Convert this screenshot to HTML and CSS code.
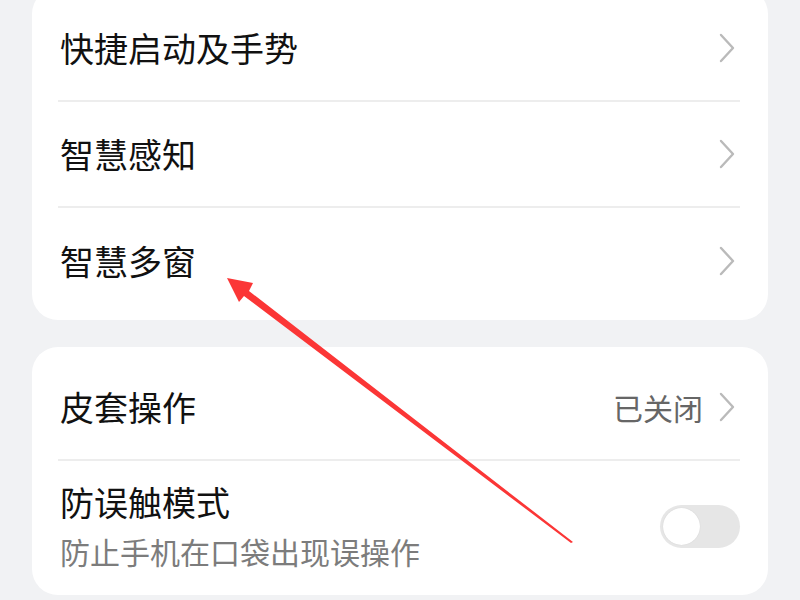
FILE: index.html
```html
<!DOCTYPE html>
<html lang="zh-CN">

<head>
    <meta charset="UTF-8">
    <meta name="viewport" content="width=device-width, initial-scale=1.0">
    <title>辅助功能</title>
    <link rel="stylesheet" href="styles.css">
</head>

<body>
    <div class="page">
        <div class="card first">
            <div class="row">
                <span class="title">快捷启动及手势</span>
                <svg class="chevron" viewBox="0 0 16 30"><path d="M2 2 L14 15 L2 28" /></svg>
            </div>
            <div class="row">
                <span class="title">智慧感知</span>
                <svg class="chevron" viewBox="0 0 16 30"><path d="M2 2 L14 15 L2 28" /></svg>
            </div>
            <div class="row">
                <span class="title">智慧多窗</span>
                <svg class="chevron" viewBox="0 0 16 30"><path d="M2 2 L14 15 L2 28" /></svg>
            </div>
        </div>

        <div class="card">
            <div class="row">
                <span class="title">皮套操作</span>
                <span class="value">已关闭</span>
                <svg class="chevron" viewBox="0 0 16 30"><path d="M2 2 L14 15 L2 28" /></svg>
            </div>
            <div class="row tall">
                <div class="text">
                    <span class="title">防误触模式</span>
                    <span class="sub">防止手机在口袋出现误操作</span>
                </div>
                <div class="switch"><span class="knob"></span></div>
            </div>
        </div>
    </div>

    <!-- annotation arrow drawn over the screenshot -->
    <svg class="arrow" viewBox="0 0 800 600">
        <polygon points="227,278 253,283 249,291 573,542 571,543 244,296 239,302" />
    </svg>
</body>

</html>
```

FILE: styles.css
```css
body {
    margin: 0;
    background: #f1f2f4;
    font-family: "Noto Sans CJK SC", "Noto Sans", sans-serif;
    color: #111;
    overflow: hidden;
}

.page {
    padding: 0 32px;
}

.card {
    background: #fff;
    border-radius: 26px;
    padding: 8px 0;
    margin-bottom: 27px;
}

.card.first {
    margin-top: -12px;
    padding-bottom: 6px;
}

.row {
    display: flex;
    align-items: center;
    box-sizing: border-box;
    height: 106px;
    margin: 0 28px 0 26px;
    padding-left: 2px;
    border-bottom: 2px solid #ededed;
}

.row:last-child {
    border-bottom: none;
}

.row.tall {
    height: 126px;
    padding-top: 4px;
}

.title {
    font-size: 34px;
    line-height: 42px;
    flex: 1;
}

.text {
    flex: 1;
    display: flex;
    flex-direction: column;
    gap: 8px;
}

.sub {
    font-size: 30px;
    line-height: 40px;
    color: #7c7c7c;
}

.value {
    font-size: 30px;
    color: #666;
    margin-right: 16px;
}

.chevron {
    width: 16px;
    height: 30px;
    margin-right: 5px;
    fill: none;
    stroke: #bababa;
    stroke-width: 2.4;
    stroke-linecap: round;
    stroke-linejoin: round;
}

.switch {
    width: 80px;
    height: 43px;
    border-radius: 22px;
    background: #e6e6e6;
    display: flex;
    align-items: center;
    padding: 0 3px;
    box-sizing: border-box;
}

.knob {
    width: 37px;
    height: 37px;
    border-radius: 50%;
    background: #fff;
    box-shadow: 0 0 1px rgba(0, 0, 0, 0.15);
}

.arrow {
    position: absolute;
    left: 0;
    top: 0;
    width: 800px;
    height: 600px;
    fill: #fb3636;
}
```
